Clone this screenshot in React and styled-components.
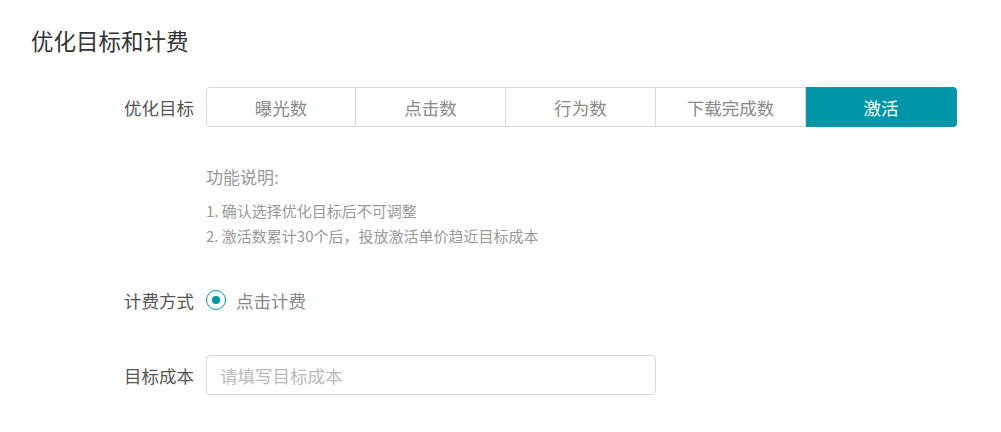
import React, { useState } from "react";
import styled, { createGlobalStyle } from "styled-components";

const GlobalStyle = createGlobalStyle`
  body {
    margin: 0;
    background: #fff;
    font-family: "Noto Sans CJK SC", "Liberation Sans", sans-serif;
  }
`;

const Page = styled.div`
  padding: 25px 31px;
`;

const Title = styled.h2`
  margin: 0;
  font-size: 22.5px;
  line-height: 30px;
  font-weight: 400;
  color: #333;
`;

const Row = styled.div`
  display: flex;
  align-items: center;
  margin-top: ${(p) => p.gap || 0}px;
`;

const Label = styled.div`
  width: 163px;
  flex: none;
  margin-right: 12px;
  text-align: right;
  font-size: 17.5px;
  color: #555;
`;

const Segments = styled.div`
  display: flex;
  height: 40px;
`;

const Segment = styled.button`
  box-sizing: border-box;
  width: 150px;
  height: 40px;
  padding: 0;
  border: 1px solid ${(p) => (p.active ? "#0096a8" : "#d9d9d9")};
  border-left-width: ${(p) => (p.first ? 1 : 0)}px;
  background: ${(p) => (p.active ? "#0096a8" : "#fff")};
  color: ${(p) => (p.active ? "#fff" : "#8a8a8a")};
  font-family: inherit;
  font-size: 17.5px;
  cursor: pointer;
  &:first-child {
    border-radius: 4px 0 0 4px;
  }
  &:last-child {
    width: 151px;
    border-radius: 0 4px 4px 0;
  }
`;

const Explain = styled.div`
  margin: 38px 0 0 175px;
  color: #999;
`;

const ExplainTitle = styled.div`
  font-size: 17px;
  line-height: 24px;
  margin-bottom: 9px;
`;

const ExplainLine = styled.div`
  font-size: 15px;
  line-height: 25px;
`;

const RadioWrap = styled.label`
  display: flex;
  align-items: center;
  height: 40px;
  font-size: 17.5px;
  color: #888;
  cursor: pointer;
`;

const RadioCircle = styled.span`
  width: 18px;
  height: 18px;
  border: 1px solid #0096a8;
  border-radius: 50%;
  display: flex;
  align-items: center;
  justify-content: center;
  margin-right: 10px;
  &::after {
    content: "";
    width: 8px;
    height: 8px;
    border-radius: 50%;
    background: #0096a8;
  }
`;

const Input = styled.input`
  box-sizing: border-box;
  width: 450px;
  height: 40px;
  padding: 0 13px;
  border: 1px solid #d9d9d9;
  border-radius: 4px;
  font-family: inherit;
  font-size: 17.5px;
  color: #333;
  outline: none;
  &::placeholder {
    color: #bbb;
  }
`;

const targets = ["曝光数", "点击数", "行为数", "下载完成数", "激活"];

const App = () => {
  const [target, setTarget] = useState("激活");

  return (
    <Page>
      <GlobalStyle />
      <Title>优化目标和计费</Title>
      <Row gap={32}>
        <Label>优化目标</Label>
        <Segments>
          {targets.map((t, i) => (
            <Segment
              key={t}
              first={i === 0}
              active={t === target}
              onClick={() => setTarget(t)}
            >
              {t}
            </Segment>
          ))}
        </Segments>
      </Row>
      <Explain>
        <ExplainTitle>功能说明:</ExplainTitle>
        <ExplainLine>1. 确认选择优化目标后不可调整</ExplainLine>
        <ExplainLine>2. 激活数累计30个后，投放激活单价趋近目标成本</ExplainLine>
      </Explain>
      <Row gap={32}>
        <Label>计费方式</Label>
        <RadioWrap>
          <RadioCircle />
          点击计费
        </RadioWrap>
      </Row>
      <Row gap={35}>
        <Label>目标成本</Label>
        <Input placeholder="请填写目标成本" />
      </Row>
    </Page>
  );
};

export default App;
